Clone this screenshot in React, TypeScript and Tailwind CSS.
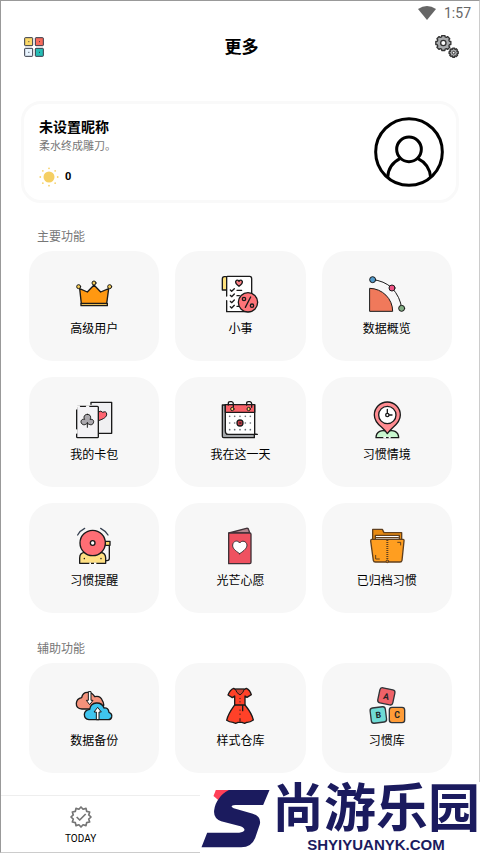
import type { ReactNode } from "react";

const INK = "#1a1a1a";

function Art({ children }: { children: ReactNode }) {
  return (
    <svg viewBox="0 0 108 108" className="size-9 overflow-visible" fill="none" stroke={INK} strokeWidth={4} strokeLinejoin="round" strokeLinecap="round" aria-hidden="true">
      {children}
    </svg>
  );
}

const gear = (cx: number, cy: number, r: number, inner: number, teeth: number) => {
  const pts: string[] = [];
  const step = (Math.PI * 2) / teeth;
  for (let i = 0; i < teeth; i++) {
    const a = i * step - Math.PI / 2;
    [[-0.36, inner], [-0.26, r], [0.26, r], [0.36, inner]].forEach(([o, d]) => {
      pts.push(`${(cx + Math.cos(a + o * step) * d).toFixed(2)},${(cy + Math.sin(a + o * step) * d).toFixed(2)}`);
    });
  }
  return pts.join(" ");
};

const seal = Array.from({ length: 24 }, (_, i) => {
  const a = (i * Math.PI) / 12 - Math.PI / 2;
  const r = i % 2 ? 24 : 30;
  return `${(33 + Math.cos(a) * r).toFixed(2)},${(33 + Math.sin(a) * r).toFixed(2)}`;
}).join(" ");

const Crown = () => (
  <Art>
    <path d="M11 38 34 48 54 27 74 48 98 38 92 83H16Z" fill="#ff9811" />
    <path d="M15 82H94V89H15Z" fill="#e9bd58" />
    <g fill="#f3ca55" strokeWidth={3}>
      <circle cx="8" cy="32" r="6" />
      <circle cx="54" cy="21" r="6" />
      <circle cx="101" cy="32" r="6" />
    </g>
  </Art>
);

const Checklist = () => (
  <Art>
    <path d="M14 2H7Q1 2 1 9V42H14Z" fill="#ffe27d" />
    <path d="M14 60V3Q14 1 17 1H83Q89 1 89 8V104Q89 107 84 107H14V74" fill="#fff" />
    <path d="M51 31C42 24 40 20 41 16Q46 9 51 16Q56 9 61 16C62 20 60 24 51 31Z" fill="#ff8086" />
    <path d="M25 42l4 4 8-8M25 58l4 4 8-8M25 76l4 4 8-8M25 92l4 4 8-8M45 43H59M45 59H52M45 91H52" />
    <circle cx="78" cy="79" r="29" fill="#ff7479" />
    <path d="M86 63 70 94" />
    <circle cx="66" cy="69" r="5" />
    <circle cx="90" cy="89" r="5" />
  </Art>
);

const Chart = () => (
  <Art>
    <path d="M3 37A69 69 0 0 1 71 106H3Z" fill="#f0795b" strokeWidth={3} />
    <path d="M11 11Q45 14 69 36Q94 63 98 97" strokeWidth={3} />
    <g strokeWidth={3}>
      <circle cx="11" cy="11" r="9" fill="#529acb" />
      <circle cx="69" cy="36" r="9" fill="#ef5385" />
      <circle cx="98" cy="97" r="9" fill="#82ad83" />
    </g>
  </Art>
);

const Cards = () => (
  <Art>
    <path d="M45 7V1H107V94H67" fill="#f0f0f2" />
    <path d="M67 30Q76 24 80 31Q91 26 92 36C93 44 84 51 67 56Z" fill="#ff6470" strokeWidth={3} />
    <rect x="2" y="13" width="65" height="94" rx="3" fill="#f4f3f6" />
    <path d="M2 20V13H10M2 84V93M32 13H38" stroke="#f7f7f7" strokeWidth={5} />
    <path d="M34 37C24 37 22 46 26 52C17 50 13 57 16 63C20 71 29 69 34 63C39 69 49 71 52 63C55 57 51 50 42 52C46 46 44 37 34 37ZM34 62V76" fill="#aaa7ad" strokeWidth={3} />
  </Art>
);

const CalendarArt = () => (
  <Art>
    <path d="M1 9H14V96L97 97V107H5Q1 107 1 103Z" fill="#a4a7aa" />
    <path d="M10 8H98V96L106 97H19Q10 97 10 86Z" fill="#fff" />
    <path d="M10 8H98V31H10Z" fill="#f96168" />
    <path d="M19 9V2Q19-1 24-1H29Q34 0 34 5V16M74 9V2Q74-1 79-1H84Q89 0 89 5V16" />
    <circle cx="31" cy="21" r="5" fill="#ffd86c" strokeWidth={3} />
    <circle cx="80" cy="21" r="5" fill="#ffd86c" strokeWidth={3} />
    <g fill="#626b73" stroke="none">
      {[43, 63, 83].map((y) => [23, 38, 54, 70, 85].map((x) => <circle key={`${x}-${y}`} cx={x} cy={y} r="2.5" />))}
    </g>
    <circle cx="54" cy="63" r="9" fill="#e94754" />
    <circle cx="54" cy="63" r="3" strokeWidth={2} />
  </Art>
);

const Pin = () => (
  <Art>
    <path d="M21 107Q21 94 32 88Q43 83 55 89Q67 83 78 88Q89 94 89 107Z" fill="#c9f7cf" />
    <path d="M43 107H51M59 107H65" stroke="#f7f7f7" strokeWidth={5} strokeLinecap="butt" />
    <path d="M55 95Q49 86 38 76C22 63 16 53 16 39A39 39 0 0 1 94 39C94 54 87 64 71 77Q61 86 55 95Z" fill="#ff8c91" />
    <circle cx="55" cy="39" r="26" fill="#fff" />
    <circle cx="55" cy="39" r="5" />
    <path d="M55 33V22M61 39H69" />
  </Art>
);

const Bell = () => (
  <Art>
    <path d="M5 21Q13 7 26 1M74 1Q88 8 96 21" stroke="#374151" />
    <path d="M100 50V91Q100 98 93 98H89" />
    <path d="M88 40H102V52H88Z" fill="#ffd868" />
    <path d="M11 106V90Q11 73 28 73H73Q89 74 89 90V106Z" fill="#ffe083" />
    <path d="M40 106H45M54 106H61" stroke="#fff" strokeLinecap="butt" strokeWidth={5} />
    <path d="M25 91V92M75 91V92" />
    <circle cx="50" cy="45" r="38" fill="#ff6e75" />
    <circle cx="50" cy="45" r="7" fill="#fff" />
  </Art>
);

const WishCard = () => (
  <Art>
    <g stroke="#403238">
      <path d="M21 15 73 1Q79 0 80 5L83 15Z" fill="#b4878e" />
      <path d="M20 15H83Q87 15 87 19V103Q87 107 83 107H20Z" fill="#ef5160" />
      <path d="M53 77C38 67 31 60 32 51C33 39 47 35 53 45C60 35 74 40 75 51C75 60 68 67 53 77Z" fill="#fff" strokeWidth={3} />
    </g>
  </Art>
);

const Folder = () => (
  <Art>
    <g stroke="#61401e">
      <path d="M11 38V4H40L45 14H98V38Z" fill="#e98b12" />
      <path d="M19 36V22H91V36Z" fill="#fff" />
      <path d="M22 29H88" />
      <path d="M8 34H102Q106 34 105 39L99 97Q98 102 93 102H19Q14 102 13 97L5 39Q5 34 8 34Z" fill="#ff9e20" />
      <path d="M55 36V98" strokeDasharray="3 3" strokeWidth={6} strokeLinecap="butt" />
      <path d="M86 43H95V51M20 82V93H31" strokeWidth={3} />
      <circle cx="55" cy="100" r="4" fill="#c77920" strokeWidth={3} />
    </g>
  </Art>
);

const Clouds = () => (
  <Art>
    <path d="M18 63Q0 61 1 46Q2 32 17 29Q20 12 36 13Q49 13 56 26Q74 22 79 38Q87 49 79 63Z" fill="#f5927b" />
    <path d="M37 12V37H31L41 50 51 37H45V12Z" fill="#fff" strokeWidth={3} />
    <path d="M39 95Q25 94 25 79Q26 66 41 64Q44 46 61 45Q78 44 84 60Q97 58 99 73Q109 77 107 87Q105 95 97 95Z" fill="#3fc5ef" />
    <path d="M61 94V72H54L65 58 76 72H69V94Z" fill="#fff" strokeWidth={3} />
  </Art>
);

const Dress = () => (
  <Art>
    <path d="M35 1 40 4H67L73 1Q84 6 88 20L75 28 69 24V51C78 62 90 78 94 96Q83 104 74 103L68 106 60 103H48L41 106 33 103Q22 103 14 97C18 78 28 65 38 51V24L31 29 18 21Q24 5 35 1Z" fill="#ff4128" />
    <path d="M40 4Q43 15 54 21Q64 15 67 4Z" fill="#cf4435" strokeWidth={3} />
    <path d="M38 51H69M62 52V68" strokeWidth={4} />
    <path d="M54 31V32M54 41V42M54 66V67M54 78V79M54 92V100" strokeWidth={3} />
  </Art>
);

function Block({ x, y, turn, fill, letter }: { x: number; y: number; turn: number; fill: string; letter: string }) {
  return (
    <g transform={`translate(${x} ${y}) rotate(${turn})`}>
      <rect x="-23" y="-23" width="46" height="46" rx="8" fill={fill} stroke="#303438" />
      <text y="9" textAnchor="middle" fontSize="26" fontWeight="700" fill="#202427" stroke="none" fontFamily="Roboto, sans-serif">{letter}</text>
    </g>
  );
}

const Blocks = () => (
  <Art>
    <Block x={52} y={25} turn={12} fill="#ef6268" letter="A" />
    <Block x={28} y={81} turn={-7} fill="#6edbd5" letter="B" />
    <Block x={84} y={81} turn={0} fill="#ff9c37" letter="C" />
  </Art>
);

type Item = { label: string; Icon: () => ReactNode };

const mainItems: Item[] = [
  { label: "高级用户", Icon: Crown },
  { label: "小事", Icon: Checklist },
  { label: "数据概览", Icon: Chart },
  { label: "我的卡包", Icon: Cards },
  { label: "我在这一天", Icon: CalendarArt },
  { label: "习惯情境", Icon: Pin },
  { label: "习惯提醒", Icon: Bell },
  { label: "光芒心愿", Icon: WishCard },
  { label: "已归档习惯", Icon: Folder },
];

const extraItems: Item[] = [
  { label: "数据备份", Icon: Clouds },
  { label: "样式仓库", Icon: Dress },
  { label: "习惯库", Icon: Blocks },
];

function Section({ title, items }: { title: string; items: Item[] }) {
  return (
    <section className="pr-[27px] pl-7">
      <h2 className="mb-1.5 px-2 text-[12px] leading-4 text-[#777]">{title}</h2>
      <div className="grid grid-cols-3 gap-4">
        {items.map(({ label, Icon }) => (
          <button key={label} type="button" className="flex flex-col items-center gap-[9px] rounded-[24px] bg-[#f7f7f7] pt-[25px] pb-6 text-[12px] leading-4 text-black">
            <Icon />
            <span>{label}</span>
          </button>
        ))}
      </div>
    </section>
  );
}

function Watermark() {
  return (
    <div className="absolute -right-px -bottom-px flex h-[71px] w-[280px] bg-white text-[#1b1b5e]">
      <svg viewBox="60 381 213 213" className="h-[71px] w-[72px] shrink-0" aria-hidden="true">
        <path d="M106 405H147L114 436 99 423Z" fill="#ff4058" />
        <path d="M145 405H267L248 450H164Q151 451 154 456Q157 460 170 463L217 476Q243 485 238 508L224 549Q213 577 182 577H63L80 533H176Q190 532 192 525Q192 519 180 514L122 499Q98 490 101 466Q103 446 115 431Q126 414 145 405Z" fill="currentColor" />
      </svg>
      <div className="flex flex-1 flex-col items-center">
        <span className="h-[55px] text-[52px] leading-[55px] font-bold whitespace-nowrap">尚游乐园</span>
        <span className="font-['Liberation_Sans',sans-serif] text-[15px] leading-4 font-bold">SHYIYUANYK.COM</span>
      </div>
    </div>
  );
}

export default function App() {
  return (
    <div className="relative flex min-h-screen flex-col border border-[#ccc] border-t-[#999] border-l-[#999] bg-white font-[Roboto,'Noto_Sans_CJK_SC',sans-serif] text-black">
      <div className="flex h-6 items-center justify-end gap-2 px-2 text-[14px] leading-4 text-[#666]">
        <svg viewBox="0 0 18 14" className="h-3.5 w-[18px]" fill="#666" aria-hidden="true">
          <path d="M0 3Q9-3 18 3L9 14Z" />
        </svg>
        <span>1:57</span>
      </div>

      <header className="flex h-11 items-center justify-between pr-5 pl-[23px]">
        <button type="button" aria-label="主题" className="flex w-6">
          <svg viewBox="0 0 60 60" className="size-5" stroke="#333846" strokeWidth={3} aria-hidden="true">
            <rect x="2" y="2" width="24" height="24" rx="2" fill="#fcd968" />
            <rect x="34" y="2" width="24" height="24" rx="2" fill="#f76b5c" />
            <rect x="2" y="34" width="24" height="24" rx="2" fill="#e9f5ff" />
            <rect x="34" y="34" width="24" height="24" rx="2" fill="#26bdb5" />
            <path d="M13 14h3M45 14h3M13 46h3M45 46h3" />
          </svg>
        </button>
        <h1 className="text-[17px] leading-6 font-bold">更多</h1>
        <button type="button" aria-label="设置" className="flex">
          <svg viewBox="0 0 72 72" className="size-6" stroke="#333" strokeWidth={4} strokeLinejoin="round" aria-hidden="true">
            <polygon points={gear(25, 24, 23, 19, 8)} fill="#a9abad" />
            <circle cx="25" cy="24" r="8" fill="#fff" />
            <polygon points={gear(56, 53, 14, 11, 8)} fill="#a9abad" />
            <circle cx="56" cy="53" r="4" fill="#fff" strokeWidth={3} />
          </svg>
        </button>
      </header>

      <main className="flex flex-1 flex-col">
        <div className="mx-5 mt-8 mb-[26px] flex items-center justify-between rounded-[20px] border-3 border-[#f9f9f9] py-[13px] pr-3 pl-[15px]">
          <div className="flex flex-col">
            <p className="text-[14px] leading-5 font-bold">未设置昵称</p>
            <p className="mt-0.5 text-[11px] leading-4 text-[#777]">柔水终成雕刀。</p>
            <div className="mt-3 flex items-center gap-1.5">
              <svg viewBox="0 0 20 20" className="size-5" aria-hidden="true">
                <circle cx="10" cy="10" r="5.5" fill="#f5cf62" />
                <g fill="#f6d36d">
                  {[0, 45, 90, 135, 180, 225, 270, 315].map((a) => (
                    <circle key={a} cx="10" cy="1.3" r="0.9" transform={`rotate(${a} 10 10)`} />
                  ))}
                </g>
              </svg>
              <span className="text-[11px] leading-4 font-bold">0</span>
            </div>
          </div>
          <svg viewBox="0 0 210 210" className="size-[70px]" fill="none" stroke="#000" strokeWidth={9} role="img" aria-label="头像">
            <circle cx="105" cy="105" r="100" />
            <circle cx="105" cy="97" r="37" />
            <path d="M41 181Q43 142 79 124M131 124Q167 142 170 181" />
          </svg>
        </div>
        <Section title="主要功能" items={mainItems} />
        <div className="h-7" />
        <Section title="辅助功能" items={extraItems} />
      </main>

      <nav className="mt-auto flex border-t border-[#eee]">
        <button type="button" className="flex w-1/3 flex-col items-center gap-[3px] pt-2.5 pb-[5px] text-[10px] leading-4">
          <svg viewBox="0 0 66 66" className="size-[22px]" fill="none" stroke="#757575" strokeWidth={5} strokeLinejoin="round" aria-hidden="true">
            <polygon points={seal} />
            <path d="M20 33 29 42 47 24" />
          </svg>
          <span>TODAY</span>
        </button>
      </nav>
      <Watermark />
    </div>
  );
}
